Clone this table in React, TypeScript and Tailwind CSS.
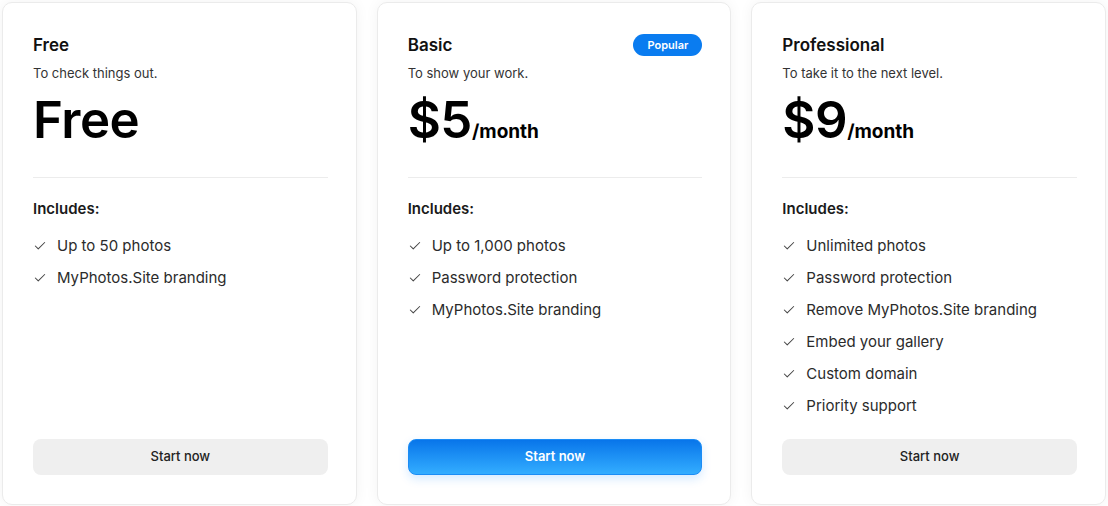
import { Check } from "lucide-react";

type Plan = {
  name: string;
  tagline: string;
  price: string;
  period?: string;
  popular?: boolean;
  features: string[];
};

const plans: Plan[] = [
  {
    name: "Free",
    tagline: "To check things out.",
    price: "Free",
    features: ["Up to 50 photos", "MyPhotos.Site branding"],
  },
  {
    name: "Basic",
    tagline: "To show your work.",
    price: "$5",
    period: "/month",
    popular: true,
    features: ["Up to 1,000 photos", "Password protection", "MyPhotos.Site branding"],
  },
  {
    name: "Professional",
    tagline: "To take it to the next level.",
    price: "$9",
    period: "/month",
    features: [
      "Unlimited photos",
      "Password protection",
      "Remove MyPhotos.Site branding",
      "Embed your gallery",
      "Custom domain",
      "Priority support",
    ],
  },
];

// Single pricing card
const PlanCard = ({ plan }: { plan: Plan }) => {
  return (
    <div className="flex-1 flex flex-col rounded-[10px] border border-[#ebebeb] bg-white pl-[30px] pr-[28px] pt-[30px] pb-[29px] shadow-[0_0_14px_rgba(0,0,0,0.05)]">
      <div className="flex items-center justify-between h-6">
        <p className="text-[17px] leading-6 font-semibold text-[#111]">{plan.name}</p>
        {plan.popular && (
          <span className="rounded-full bg-[#0a7cf0] px-[14px] h-[22px] flex items-center text-[11px] font-semibold text-white">
            Popular
          </span>
        )}
      </div>
      <p className="mt-[6px] text-[13px] leading-5 text-[#333]">{plan.tagline}</p>
      <div className="mt-[9px] h-[55px] flex items-baseline">
        <span className="text-[51px] leading-[55px] font-semibold tracking-[-0.5px] text-black">
          {plan.price}
        </span>
        {plan.period && (
          <span className="text-[19px] font-bold text-black">{plan.period}</span>
        )}
      </div>
      <div className="mt-[30px] h-px bg-[#ececec]" />
      <p className="mt-[20px] text-[15px] leading-[22px] font-semibold text-[#1a1a1a]">Includes:</p>
      <ul className="mt-[15px] flex flex-col gap-[10px]">
        {plan.features.map((f) => (
          <li key={f} className="flex items-center gap-[10px] text-[15px] leading-[22px] text-[#2b2b2b]">
            <Check className="w-[14px] h-[14px] text-[#444]" strokeWidth={1.75} />
            {f}
          </li>
        ))}
      </ul>
      <div className="mt-auto">
        {plan.popular ? (
          <button className="w-full h-[36px] rounded-[8px] border border-[#1b8cf5] bg-gradient-to-b from-[#0875ea] to-[#33adff] text-[13px] font-semibold text-white shadow-[0_4px_10px_rgba(30,140,255,0.18)]">
            Start now
          </button>
        ) : (
          <button className="w-full h-[36px] rounded-[8px] bg-[#efefef] text-[13px] font-medium text-[#222]">
            Start now
          </button>
        )}
      </div>
    </div>
  );
};

const App = () => {
  return (
    <div className="h-[506px] w-[1108px] bg-white px-[2px] pt-[2px] pb-[1px] flex gap-5 font-['Inter',sans-serif]">
      {plans.map((p) => (
        <PlanCard key={p.name} plan={p} />
      ))}
    </div>
  );
};

export default App;
